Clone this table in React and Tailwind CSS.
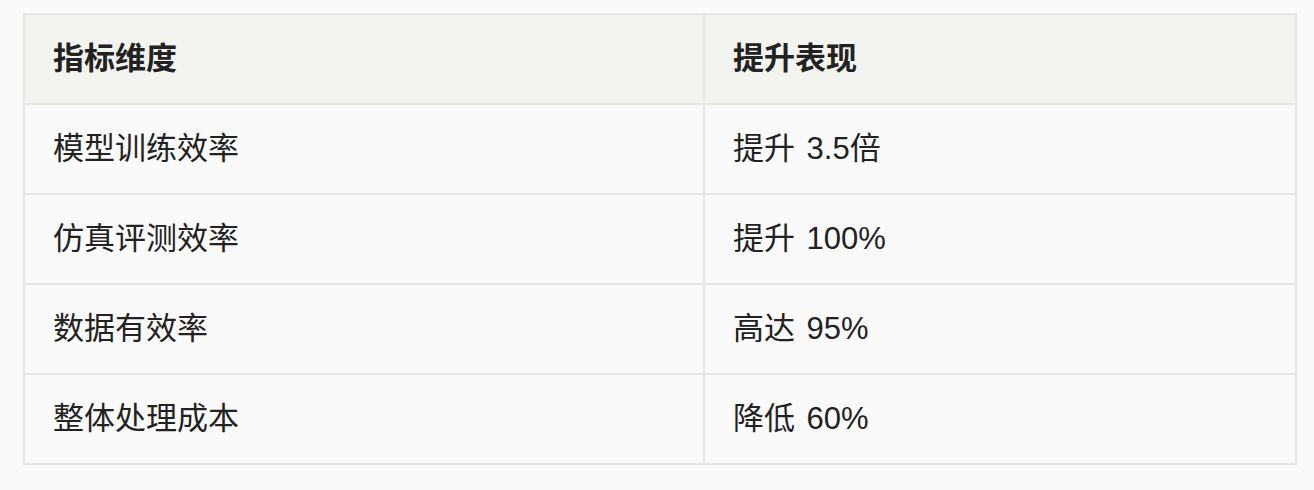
const rows = [
  ['模型训练效率', '提升 3.5倍'],
  ['仿真评测效率', '提升 100%'],
  ['数据有效率', '高达 95%'],
  ['整体处理成本', '降低 60%'],
]

export default function App() {
  return (
    <div
      className="min-h-screen w-[1314px] h-[490px] bg-[#fafaf9] pt-[13px] pl-[23px]"
      style={{ fontFamily: '"Liberation Sans", "Noto Sans CJK SC", sans-serif' }}
    >
      <table className="w-[1274px] border-collapse border-2 border-[#e5e5e3] text-[31px] text-[#222]">
        <thead>
          <tr className="bg-[#f3f3ef]">
            <th className="w-[680px] h-[90px] border-2 border-[#e5e5e3] pl-[28px] text-left font-bold">指标维度</th>
            <th className="h-[90px] border-2 border-[#e5e5e3] pl-[28px] text-left font-bold">提升表现</th>
          </tr>
        </thead>
        <tbody>
          {rows.map(([k, v]) => (
            <tr key={k} className="bg-[#fafafa]">
              <td className="h-[90px] border-2 border-[#e5e5e3] pl-[28px]">{k}</td>
              <td className="h-[90px] border-2 border-[#e5e5e3] pl-[28px] [word-spacing:3px]">{v}</td>
            </tr>
          ))}
        </tbody>
      </table>
    </div>
  )
}
